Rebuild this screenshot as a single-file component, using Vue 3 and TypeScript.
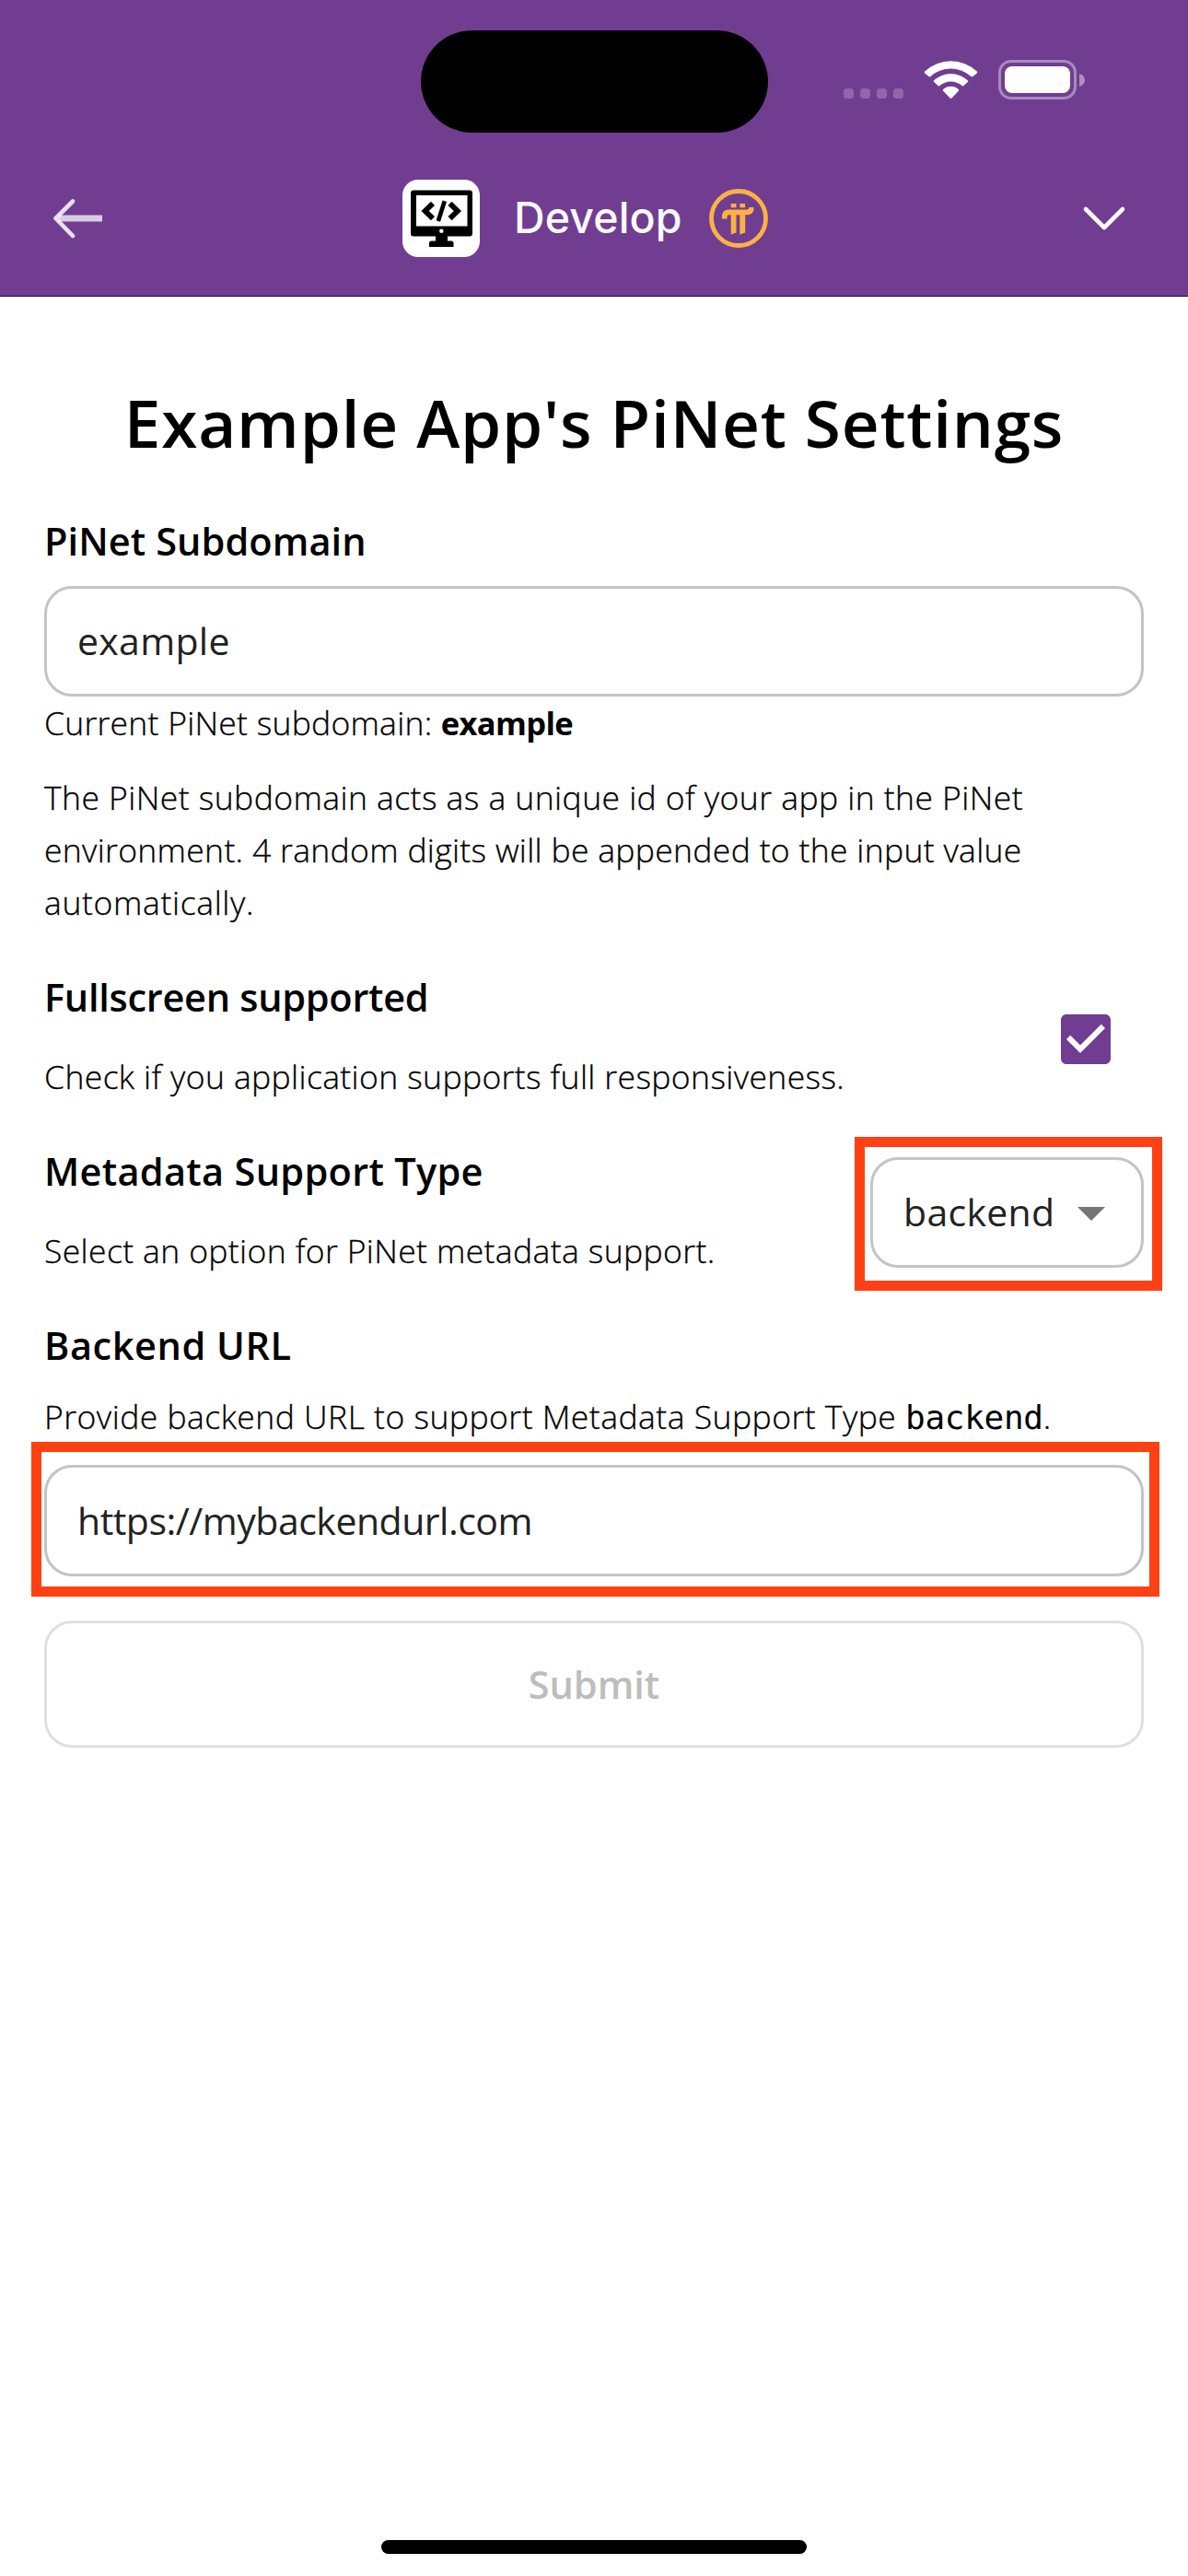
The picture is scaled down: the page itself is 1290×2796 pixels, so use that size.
<script setup lang="ts">
import { ref } from 'vue'

const subdomain = ref('example')
const backendUrl = ref('https://mybackendurl.com')
const fullscreen = ref(true)
const signalDots = [0, 18, 36, 54]
</script>

<template>
  <div class="screen">
    <header class="top">
      <div class="status">
        <div class="island"></div>
        <svg class="status-icons" width="263" height="44" viewBox="916 65 263 44">
          <rect v-for="d in signalDots" :key="d" :x="916 + d" y="96" width="11" height="11" rx="3.5" fill="#fff" fill-opacity=".22" />
          <g fill="#fff">
            <path d="M1004.2 77.6 Q1003.4 78.5 1004.2 79.4 L1008.6 83 Q1009.5 83.8 1010.5 82.9 A33 33 0 0 1 1054.5 82.9 Q1055.5 83.8 1056.4 83 L1060.8 79.4 Q1061.6 78.5 1060.8 77.6 A41 41 0 0 0 1004.2 77.6 Z" />
            <path d="M1014.2 87.2 Q1013.3 88 1014.2 88.9 L1018.5 93 Q1019.5 93.8 1020.5 93 A18 18 0 0 1 1044.5 93 Q1045.5 93.8 1046.5 93 L1050.8 88.9 Q1051.7 88 1050.8 87.2 A27 27 0 0 0 1014.2 87.2 Z" />
            <path d="M1024.2 97 Q1023.3 97.9 1024.2 98.8 L1031.6 106.4 Q1032.5 107.3 1033.4 106.4 L1040.8 98.8 Q1041.7 97.9 1040.8 97 A12.5 12.5 0 0 0 1024.2 97 Z" />
            <rect x="1091" y="72" width="71" height="29" rx="8" />
            <path d="M1172 80 Q1178 82 1178 87 Q1178 92 1172 94 Z" fill-opacity=".42" />
          </g>
          <rect x="1085.5" y="66.5" width="82" height="40" rx="12.5" fill="none" stroke="#fff" stroke-opacity=".4" stroke-width="3" />
        </svg>
      </div>
      <nav class="bar">
        <svg class="back" width="60" height="50" viewBox="54 212 60 50" fill="none" stroke="#fff">
          <path d="M64 237 H111" stroke-width="7" stroke-opacity=".74" />
          <path d="M79 218.5 L60.5 237 L79 256" stroke-width="4.6" stroke-opacity=".84" stroke-linecap="round" stroke-linejoin="round" />
        </svg>
        <div class="brand">
          <svg width="84" height="84" viewBox="437 195 84 84">
            <rect x="437" y="195" width="84" height="84" rx="17" fill="#fff" />
            <path fill-rule="evenodd" d="M449 206.5 H510 Q513 206.5 513 209.5 V253.5 Q513 256.5 510 256.5 H449 Q446 256.5 446 253.5 V209.5 Q446 206.5 449 206.5 Z M452 212 V245.5 H507.5 V212 Z" />
            <path d="M473 256 H486 V261.5 H490 Q492.5 261.5 492.5 264 V268 H466 V264 Q466 261.5 468.5 261.5 H473 Z" />
            <circle cx="479.3" cy="250.7" r="2.2" fill="#fff" />
            <path d="M470 220.8 L461.6 229 L470 237.2 M488.5 220.8 L496.9 229 L488.5 237.2" fill="none" stroke="#000" stroke-width="5.8" />
            <path d="M482.8 218.3 L475.8 240" stroke="#000" stroke-width="4.6" />
          </svg>
          <span class="brand-name">Develop</span>
          <svg width="66" height="66" viewBox="769 204 66 66">
            <circle cx="802" cy="237" r="29.5" fill="none" stroke="#fbb244" stroke-width="4.8" />
            <g fill="#fbb244">
              <rect x="793.7" y="221" width="5.8" height="4.3" />
              <rect x="803.3" y="221" width="5.8" height="4.3" />
              <path d="M784 237.5 V234 Q784.5 227.7 791 227.5 H810 Q813.3 227.5 813.5 225 H818.5 V227 Q818 233 811.5 233.3 H809.2 V252.5 L803.3 254.5 V233.3 H799.5 V252.5 L793.7 254.5 V233.3 H791.5 Q789.5 233.3 789.5 235.5 V237.5 Z" />
            </g>
          </svg>
        </div>
        <svg class="more" width="56" height="36" viewBox="1171 219 56 36">
          <path d="M1179 227 L1199 247 L1219 227" fill="none" stroke="#fafafa" stroke-width="4.6" stroke-linecap="round" stroke-linejoin="round" />
        </svg>
      </nav>
    </header>

    <main class="content">
      <h1>Example App's PiNet Settings</h1>

      <h2 class="first">PiNet Subdomain</h2>
      <input v-model="subdomain" class="field" type="text" />
      <p class="current">Current PiNet subdomain: <strong>example</strong></p>
      <p class="about">
        The PiNet subdomain acts as a unique id of your app in the PiNet
        <span class="snug">environment. 4 random digits will be appended to the input value</span>
        <span class="loose">automatically.</span>
      </p>

      <section class="row fullscreen">
        <div>
          <h2>Fullscreen supported</h2>
          <p>Check if you application supports full responsiveness.</p>
        </div>
        <svg class="check" width="72" height="72" viewBox="0 0 24 24" role="checkbox" :aria-checked="fullscreen" @click="fullscreen = !fullscreen">
          <path fill="#703d92" d="M19 3H5c-1.11 0-2 .9-2 2v14c0 1.1.89 2 2 2h14c1.11 0 2-.9 2-2V5c0-1.1-.89-2-2-2zm-9 14l-5-5 1.41-1.41L10 14.17l7.59-7.59L19 8l-9 9z" />
        </svg>
      </section>

      <section class="row metadata">
        <div>
          <h2>Metadata Support Type</h2>
          <p>Select an option for PiNet metadata support.</p>
        </div>
        <div class="select">
          <span>backend</span>
          <i class="caret"></i>
          <div class="mark mark-select"></div>
        </div>
      </section>

      <h2 class="url-label">Backend URL</h2>
      <p class="url-hint">Provide backend URL to support Metadata Support Type <code>backend</code>.</p>
      <div class="url-box">
        <input v-model="backendUrl" class="field url" type="text" />
        <div class="mark mark-url"></div>
      </div>

      <button class="submit" disabled>Submit</button>
    </main>

    <div class="home"></div>
  </div>
</template>

<style>
body {
  margin: 0;
  background: #fff;
}
</style>

<style scoped>
.screen {
  width: 1290px;
  height: 2796px;
  display: flex;
  flex-direction: column;
  overflow: hidden;
  background: #fff;
  color: #000;
  font-family: "Open Sans", "Noto Sans", sans-serif;
}
.top {
  height: 322px;
  flex: none;
  box-sizing: border-box;
  background: #713d91;
  border-bottom: 1px solid #1e0d28;
}
.status {
  height: 145px;
  display: grid;
  grid-template-columns: 456.5px 377px 1fr;
}
.island {
  grid-column: 2;
  margin-top: 33.4px;
  height: 111px;
  border-radius: 55.5px;
  background: #000;
}
.status-icons {
  margin: 65px 0 0 82.5px;
}
.bar {
  height: 176px;
  display: flex;
  align-items: center;
  padding: 8px 63px 0 54px;
  box-sizing: border-box;
}
.brand {
  display: flex;
  align-items: center;
  margin-left: 323px;
}
.brand-name {
  width: 211px;
  margin: 0 0 2px 37px;
  font: 550 46.5px/60px Inter, sans-serif;
  letter-spacing: 0.15px;
  color: #fafafa;
}
.more {
  margin-left: auto;
}
.content {
  flex: 1;
  padding: 0 48px;
}
h1 {
  margin: 92px 0 0;
  font-size: 71px;
  line-height: 90px;
  font-weight: 600;
  letter-spacing: 0.8px;
  text-align: center;
}
h2 {
  margin: 0;
  font-size: 41.5px;
  line-height: 56px;
  font-weight: 600;
}
p {
  margin: 0;
  font-size: 35.5px;
  line-height: 57px;
  font-weight: 300;
  letter-spacing: 0.38px;
  -webkit-text-stroke: 0.3px currentColor;
}
.first {
  margin-top: 55px;
  letter-spacing: 0.08px;
}
.field {
  display: block;
  width: 1194px;
  height: 120px;
  margin: 21px 0 0;
  padding: 0 33px 3px;
  box-sizing: border-box;
  border: 3px solid #c4c4c4;
  border-radius: 30px;
  outline: none;
  background: #fff;
  color: #222;
  font: 400 41px "Open Sans", sans-serif;
  letter-spacing: 0.3px;
}
.current {
  margin-top: 1px;
  line-height: 54px;
  letter-spacing: 0.25px;
}
.current strong {
  font-size: 34.5px;
  line-height: 1;
  font-weight: 700;
  letter-spacing: -0.65px;
  -webkit-text-stroke: 0;
}
.about {
  margin-top: 26px;
  letter-spacing: 0.44px;
}
.about span {
  display: block;
}
.about .snug {
  letter-spacing: 0.32px;
}
.about .loose {
  letter-spacing: 0.65px;
}
.row {
  display: flex;
  justify-content: space-between;
  align-items: flex-start;
}
.fullscreen {
  margin-top: 46px;
}
.fullscreen h2 {
  letter-spacing: -0.28px;
}
.fullscreen p {
  margin-top: 30px;
}
.check {
  display: block;
  margin: 38px 27px 0 0;
}
.metadata {
  margin-top: 46px;
}
.metadata h2 {
  letter-spacing: 0.3px;
}
.metadata p {
  margin-top: 30px;
}
.select {
  position: relative;
  display: flex;
  align-items: center;
  justify-content: space-between;
  width: 297px;
  height: 120px;
  margin-top: 13px;
  padding: 0 39px 3px 33px;
  box-sizing: border-box;
  border: 3px solid #c4c4c4;
  border-radius: 30px;
  color: #222;
  font-size: 41px;
  letter-spacing: 0.3px;
}
.caret {
  border: 15px solid transparent;
  border-top-color: #757575;
  border-bottom: 0;
  margin-top: 6px;
}
.mark {
  position: absolute;
  border: 11px solid #ff4013;
  pointer-events: none;
}
.mark-select {
  inset: -25.5px -22.5px -28px -20px;
}
.mark-url {
  inset: -28px -20px -25px -14px;
  inset: -25px -17px -22px -14px;
}
.url-label {
  margin-top: 46px;
  letter-spacing: 0.55px;
}
.url-hint {
  margin-top: 21px;
  letter-spacing: 0.48px;
}
.url-hint code {
  font: 400 36px/1 "DejaVu Sans Mono", monospace;
  letter-spacing: -0.3px;
  -webkit-text-stroke: 0;
}
.url-box {
  position: relative;
  margin-top: 24px;
}
.url {
  height: 121px;
  margin: 0;
  padding-bottom: 1px;
  letter-spacing: -0.5px;
}
.submit {
  display: block;
  width: 1194px;
  height: 138px;
  margin-top: 48px;
  box-sizing: border-box;
  border: 3px solid #e0e0e0;
  border-radius: 30px;
  background: #fff;
  color: #bdbdbd;
  font: 600 41.5px "Open Sans", sans-serif;
}
.home {
  flex: none;
  width: 462px;
  height: 15px;
  margin: 0 0 24px 414px;
  border-radius: 8px;
  background: #000;
}
</style>
